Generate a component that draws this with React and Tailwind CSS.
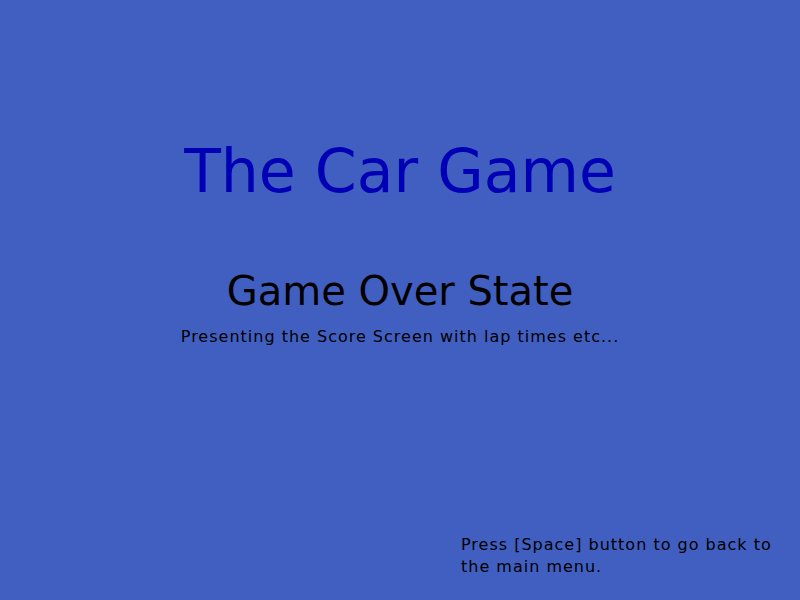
export default function App() {
  return (
    <div
      className="flex h-[600px] w-[800px] flex-col items-center bg-[#415fc1] pt-[141px] pb-[22px] text-black"
      style={{ fontFamily: '"DejaVu Sans", Verdana, sans-serif' }}
    >
      <h1 className="text-[60px] leading-none text-[#0000b4]">The Car Game</h1>
      <h2 className="mt-[70px] text-[40px] leading-none">Game Over State</h2>
      <p className="mt-[18px] text-[16px] leading-none tracking-[1px]">
        Presenting the Score Screen with lap times etc...
      </p>
      <p className="mt-auto self-start pl-[461px] text-[16px] leading-[22px] tracking-[1px]">
        Press [Space] button to go back to
        <br />
        the main menu.
      </p>
    </div>
  )
}
